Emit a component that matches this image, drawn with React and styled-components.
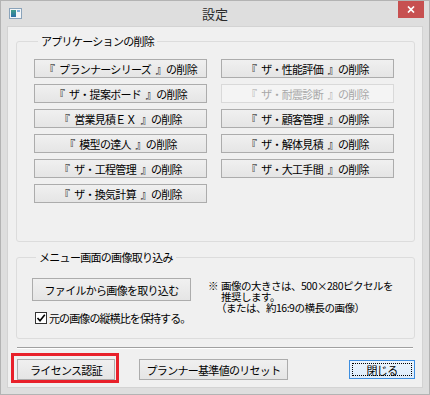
import React from "react";
import styled, { createGlobalStyle } from "styled-components";

const Global = createGlobalStyle`
  html, body { margin: 0; padding: 0; background: #dedede; }
  body { font-family: "Noto Sans CJK JP", "Liberation Sans", sans-serif; color: #000; }
  * { box-sizing: border-box; }
`;

const Window = styled.div`
  width: 430px;
  height: 395px;
  display: flex;
  flex-direction: column;
  background: #dedede;
  border: 1px solid #b3b3b3;
`;

const TitleBar = styled.div`
  height: 25px;
  display: grid;
  grid-template-columns: 1fr auto 1fr;
  align-items: center;
`;

const AppIcon = styled.div`
  padding-left: 8px;
  display: flex;
  align-items: center;
`;

const Title = styled.div`
  font-size: 13px;
  line-height: 16px;
  color: #2b2b2b;
`;

const CloseBox = styled.div`
  justify-self: end;
  align-self: start;
  margin-right: 5px;
  width: 26px;
  height: 17px;
  background: #c75050;
  display: flex;
  align-items: center;
  justify-content: center;
`;

const Client = styled.div`
  flex: 1;
  margin: 0 6px 6px 6px;
  background: #f0f0f0;
  border: 1px solid #d3d3d3;
  padding: 7px 7px 0 8px;
  display: flex;
  flex-direction: column;
`;

const Group = styled.fieldset`
  margin: ${(p) => p.$top || 0}px 0 0 0;
  padding: ${(p) => p.$pad};
  border: 1px solid #dcdcdc;
  border-radius: 3px;
  min-width: 0;
`;

const Legend = styled.legend`
  margin-left: 4px;
  padding: 0 3px;
  font-size: 11px;
  line-height: 14px;
  letter-spacing: -0.7px;
  color: #000;
`;

const ButtonGrid = styled.div`
  display: grid;
  grid-auto-flow: column;
  grid-template-columns: 173px 173px;
  grid-template-rows: repeat(6, 19px);
  column-gap: 14px;
  row-gap: 6px;
`;

const WinButton = styled.button`
  width: ${(p) => p.$w}px;
  height: ${(p) => p.$h || 19}px;
  margin: 0;
  padding: 0;
  border: 1px solid ${(p) => (p.disabled ? "#d9d9d9" : p.$focus ? "#3d8ee0" : "#acacac")};
  background: ${(p) =>
    p.disabled ? "#f4f4f4" : p.$focus ? "linear-gradient(#ecf4fc, #dcecfc)" : "linear-gradient(#f0f0f0, #e5e5e5)"};
  color: ${(p) => (p.disabled ? "#a8a8a8" : "#000")};
  font-family: "Noto Sans CJK JP", "Liberation Sans", sans-serif;
  font-size: 11px;
  line-height: 14px;
  letter-spacing: -0.7px;
  word-spacing: 3px;
  white-space: pre;
  display: flex;
  align-items: center;
  justify-content: center;
  outline: ${(p) => (p.$focus ? "1px dotted #000" : "none")};
  outline-offset: -4px;
`;

const ImportBody = styled.div`
  display: flex;
  align-items: flex-start;
`;

const LeftCol = styled.div`
  display: flex;
  flex-direction: column;
  gap: 10px;
`;

const CheckRow = styled.label`
  display: flex;
  align-items: center;
  gap: 2px;
  margin-left: 3px;
  font-size: 11px;
  line-height: 14px;
  letter-spacing: -0.9px;
`;

const CheckBox = styled.span`
  width: 12px;
  height: 12px;
  border: 1px solid #333;
  background: #fff;
  display: flex;
  align-items: center;
  justify-content: center;
`;

const Note = styled.div`
  margin-left: 17px;
  margin-top: 2px;
  display: flex;
  font-size: 10.5px;
  line-height: 11px;
  letter-spacing: -0.5px;
`;

const NoteMark = styled.span`
  width: 13px;
  flex: none;
`;

const NoteLines = styled.div`
  display: flex;
  flex-direction: column;
`;

const NoteLine = styled.div`
  height: 11px;
  line-height: 11px;
  white-space: nowrap;
  margin-left: ${(p) => p.$shift || 0}px;
`;

const Separator = styled.div`
  margin: 8px 2px 0 1px;
  border-top: 1px solid #a0a0a0;
  border-bottom: 1px solid #fff;
`;

const BottomRow = styled.div`
  margin-top: 10px;
  display: flex;
  align-items: center;
  padding-left: 1px;
`;

const Highlight = styled.div`
  position: relative;
  &::after {
    content: "";
    position: absolute;
    left: -6px;
    right: -4px;
    top: -6px;
    bottom: -3px;
    border: 3px solid #e8202a;
    pointer-events: none;
  }
`;

const ResetWrap = styled.div`
  margin-left: 24px;
`;

const Spacer = styled.div`
  flex: 1;
`;

const leftButtons = [
  "『 プランナーシリーズ 』の削除",
  "『 ザ・提案ボード 』の削除",
  "『 営業見積ＥＸ 』の削除",
  "『 模型の達人 』の削除",
  "『 ザ・工程管理 』の削除",
  "『 ザ・換気計算 』の削除",
];

const rightButtons = [
  { t: "『 ザ・性能評価 』の削除" },
  { t: "『 ザ・耐震診断 』の削除", d: true },
  { t: "『 ザ・顧客管理 』の削除" },
  { t: "『 ザ・解体見積 』の削除" },
  { t: "『 ザ・大工手間 』の削除" },
];

export default function App() {
  return (
    <>
      <Global />
      <Window>
        <TitleBar>
          <AppIcon>
            <svg width="13" height="11" viewBox="0 0 13 11">
              <defs>
                <linearGradient id="ig" x1="0" y1="0" x2="0" y2="1">
                  <stop offset="0" stopColor="#3f9f8a" />
                  <stop offset="1" stopColor="#2a6fa8" />
                </linearGradient>
              </defs>
              <rect x="0.5" y="0.5" width="12" height="10" fill="#f4f6f8" stroke="#8aa3ba" />
              <rect x="2" y="2" width="5" height="7" fill="url(#ig)" />
              <rect x="8" y="2" width="3" height="2" fill="#7fb0dc" />
            </svg>
          </AppIcon>
          <Title>設定</Title>
          <CloseBox>
            <svg width="8" height="7" viewBox="0 0 8 7">
              <path d="M1 0.5 L7 6.5 M7 0.5 L1 6.5" stroke="#fff" strokeWidth="1.7" />
            </svg>
          </CloseBox>
        </TitleBar>
        <Client>
          <Group $pad="11px 0 38px 17px">
            <Legend>アプリケーションの削除</Legend>
            <ButtonGrid>
              {leftButtons.map((t) => (
                <WinButton key={t} $w={173}>{t}</WinButton>
              ))}
              {rightButtons.map((b) => (
                <WinButton key={b.t} $w={173} disabled={b.d}>{b.t}</WinButton>
              ))}
            </ButtonGrid>
          </Group>
          <Group $top={8} $pad="14px 0 13px 15px">
            <Legend>メニュー画面の画像取り込み</Legend>
            <ImportBody>
              <LeftCol>
                <WinButton $w={159} $h={23}>ファイルから画像を取り込む</WinButton>
                <CheckRow>
                  <CheckBox>
                    <svg width="10" height="10" viewBox="0 0 10 10">
                      <path d="M1.5 5 L4 7.8 L8.8 1.8" fill="none" stroke="#000" strokeWidth="1.6" />
                    </svg>
                  </CheckBox>
                  元の画像の縦横比を保持する。
                </CheckRow>
              </LeftCol>
              <Note>
                <NoteMark>※</NoteMark>
                <NoteLines>
                  <NoteLine>画像の大きさは、500×280ピクセルを</NoteLine>
                  <NoteLine>推奨します。</NoteLine>
                  <NoteLine $shift={-5}>（または、約16:9の横長の画像）</NoteLine>
                </NoteLines>
              </Note>
            </ImportBody>
          </Group>
          <Separator />
          <BottomRow>
            <Highlight>
              <WinButton $w={98} $h={21}>ライセンス認証</WinButton>
            </Highlight>
            <ResetWrap>
              <WinButton $w={149} $h={21}>プランナー基準値のリセット</WinButton>
            </ResetWrap>
            <Spacer />
            <WinButton $w={66} $h={19} $focus>閉じる</WinButton>
          </BottomRow>
        </Client>
      </Window>
    </>
  );
}
